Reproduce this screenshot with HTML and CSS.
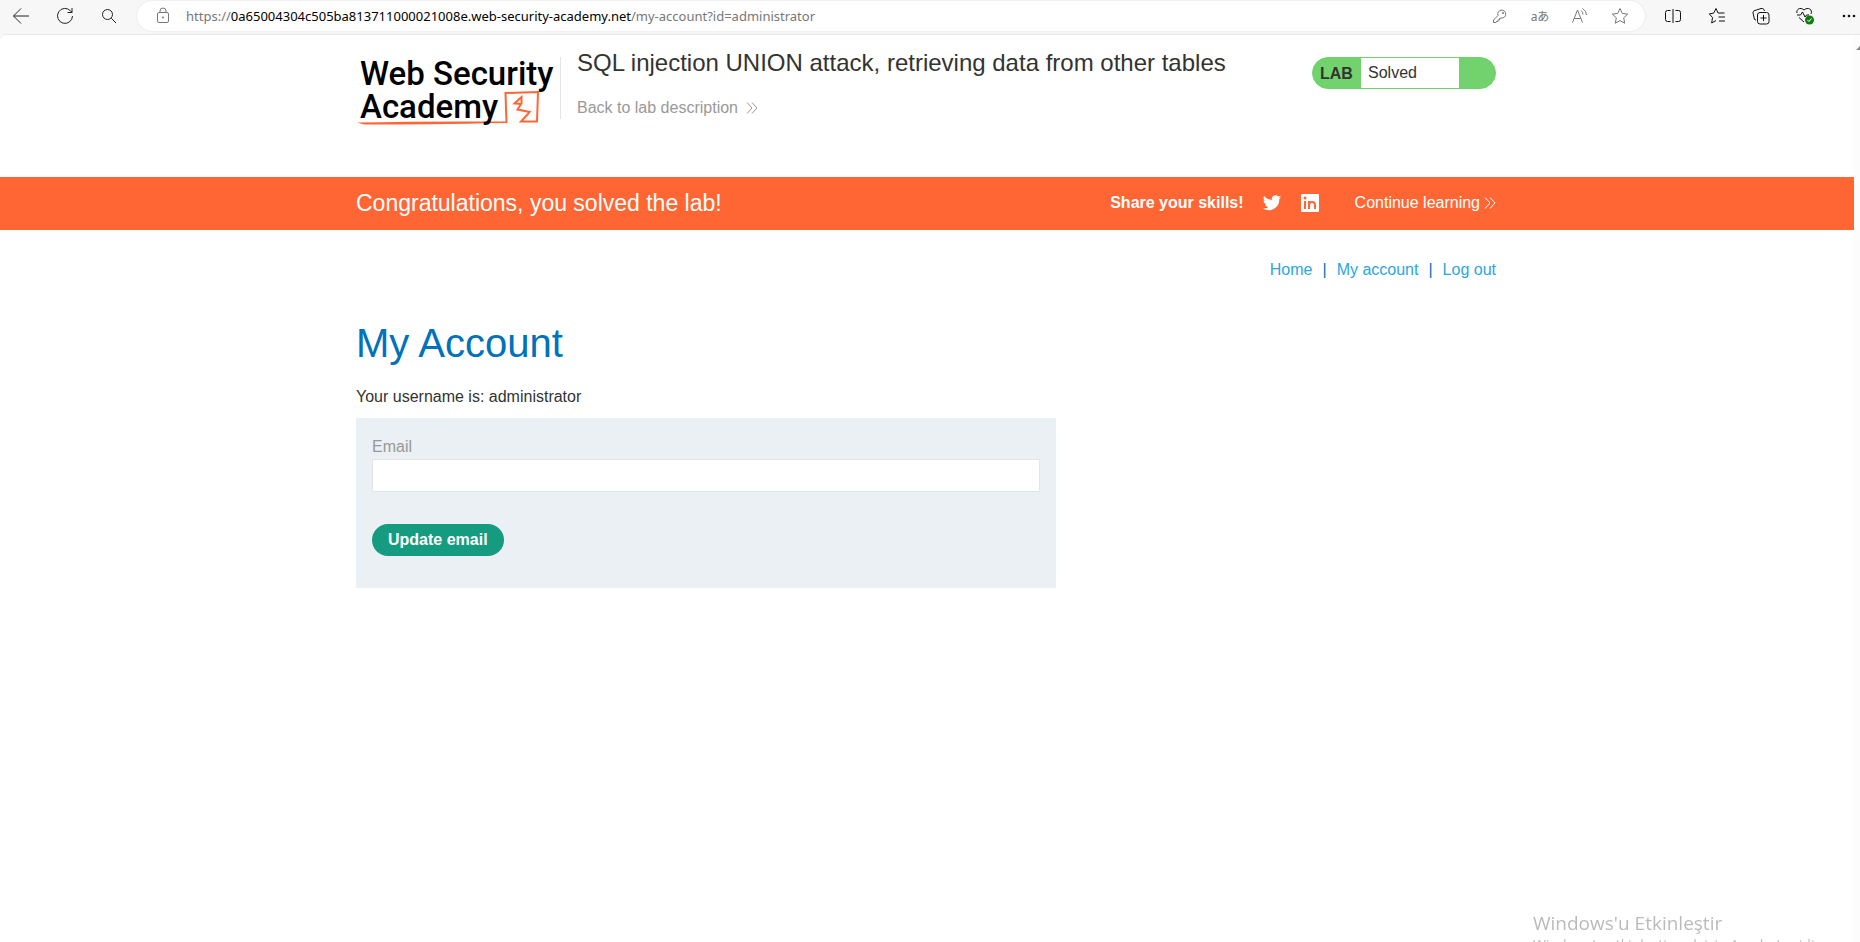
FILE: index.html
```html
<!DOCTYPE html>
<html lang="en">
<head>
    <meta charset="UTF-8">
    <title>SQL injection UNION attack, retrieving data from other tables</title>
    <link rel="stylesheet" href="styles.css">
</head>
<body>
<!-- browser toolbar -->
<div class="toolbar">
    <div class="tools-left">
        <button class="tool" aria-label="Back"><svg width="18" height="18" viewBox="0 0 18 18"><path d="M17 9H1.500M9 1.500L1.500 9L9 16.500"/></svg></button>
        <button class="tool" aria-label="Refresh"><svg width="18" height="18" viewBox="0 0 18 18"><path d="M16.500 9A7.500 7.500 0 1 1 14.500 3.800L16 5.500M16 1V5.500H11.500"/></svg></button>
        <button class="tool" aria-label="Search"><svg width="16" height="16" viewBox="0 0 16 16"><circle cx="6.500" cy="6.500" r="5"/><path d="M10.300 10.300L15 15"/></svg></button>
    </div>
    <div class="address">
        <svg class="lock" width="14" height="18" viewBox="0 0 14 18"><rect x="1.500" y="5.500" width="11" height="10" rx="1.500"/><path d="M4 5.500V4A3 3 0 0 1 10 4V5.500"/><circle class="dot" cx="7" cy="10.500" r="1"/></svg>
        <p class="url">https://<b>0a65004304c505ba813711000021008e.web-security-academy.net</b>/my-account?id=administrator</p>
        <button class="tool" aria-label="Passwords"><svg width="16" height="16" viewBox="0 0 16 16"><path d="M6 7.500A4 4 0 1 1 9 10L7.500 10.500V12H6V13.500H4.500L4 14.500H1.500V12Z"/><circle class="dot" cx="11" cy="5" r="1"/></svg></button>
        <button class="tool translate" aria-label="Translate">aあ</button>
        <button class="tool" aria-label="Read aloud"><svg width="18" height="18" viewBox="0 0 18 18"><path d="M1.500 15.500L6.500 3L11.500 15.500M3.200 11.500H9.800M10 3.500Q12 5 12 7.500M11.500 1.500Q15.500 4 15.500 8"/></svg></button>
        <button class="tool" aria-label="Add to favourites"><svg width="18" height="18" viewBox="0 0 18 18"><path d="M9 1.500L11.300 6.400L16.700 7.100L12.700 10.800L13.700 16.200L9 13.600L4.300 16.200L5.300 10.800L1.300 7.100L6.700 6.400Z"/></svg></button>
    </div>
    <div class="tools-right">
        <button class="tool" aria-label="Split screen"><svg width="18" height="18" viewBox="0 0 18 18"><path d="M6.500 3.500H3.500Q1.500 3.500 1.500 5.500V12.500Q1.500 14.500 3.500 14.500H6.500M11.500 3.500H14.500Q16.500 3.500 16.500 5.500V12.500Q16.500 14.500 14.500 14.500H11.500M9 2V16"/></svg></button>
        <button class="tool" aria-label="Favourites"><svg width="18" height="18" viewBox="0 0 18 18"><path d="M16.500 6H10L8 1.500L5.700 6.100L1.300 6.900L4.500 10.500L3.700 16L8 13.500M10.500 10H17M11 14H17"/></svg></button>
        <button class="tool" aria-label="Collections"><svg width="18" height="18" viewBox="0 0 18 18"><path d="M4 13L2.500 12.500L1 6Q.7 4.500 2 3.800L9 1.500Q11 1 12 2.500L12.500 4M11.500 8V14M8.500 11H14.500"/><rect x="5.500" y="5.500" width="11.500" height="11.500" rx="2.500"/></svg></button>
        <button class="tool" aria-label="Browser essentials"><svg width="20" height="20" viewBox="0 0 20 20"><path d="M2 7C1 3.500 5 .5 9 4C13 .5 18 3.500 16 8M2 9H5.500L7.500 6L10 11L11.500 9H14M4 11.500L9 16"/><circle class="badge" cx="14.500" cy="14" r="4.500"/><path class="tick" d="M12.500 14L14 15.500L16.500 12.500"/></svg></button>
        <button class="tool" aria-label="More"><svg width="16" height="16" viewBox="0 0 16 16"><circle class="dot" cx="3" cy="8" r="1.300"/><circle class="dot" cx="8" cy="8" r="1.300"/><circle class="dot" cx="13" cy="8" r="1.300"/></svg></button>
    </div>
</div>

<div class="viewport">
    <div class="page">
        <header class="container lab-header">
            <svg class="logo" width="204" height="76" viewBox="0 0 204 76" role="img" aria-label="Web Security Academy">
                <path class="line" d="M1 70.500Q70 69 151 69.500V71Q70 72.500 8 72.500Z"/>
                <path class="frame" d="M150.500 71L149.500 41L182 40L181 69.500L165 69.500L171.500 62.500L173.500 60L161.500 57.500L165 52L158.500 51.500L165.500 45V51.500"/>
                <text x="4" y="33">Web Security</text>
                <text x="4" y="66">Academy</text>
            </svg>
            <div class="title">
                <h2>SQL injection UNION attack, retrieving data from other tables</h2>
                <a class="back" href="#">Back to lab description
                    <svg width="12" height="12" viewBox="0 0 12 12"><path d="M1 .5L6 6L1 11.500M6 .5L11 6L6 11.500"/></svg>
                </a>
            </div>
            <div class="status">
                <span class="lab">LAB</span>
                <p>Solved</p>
            </div>
        </header>

        <!-- solved banner -->
        <section class="banner">
            <div class="container">
                <h4>Congratulations, you solved the lab!</h4>
                <div class="share">
                    <span>Share your skills!</span>
                    <a href="#" aria-label="Twitter"><svg width="20" height="20" viewBox="0 0 24 24"><path class="fill" d="M23 4.900c-.8.400-1.700.6-2.600.7.900-.6 1.600-1.400 2-2.500-.9.500-1.800.9-2.900 1.100A4.500 4.500 0 0 0 11.800 8.300C8 8.100 4.700 6.300 2.500 3.600c-1.200 2.100-.6 4.700 1.400 6-.7 0-1.400-.2-2-.6 0 2.200 1.500 4.100 3.600 4.500-.7.200-1.400.2-2 .1.600 1.800 2.200 3.100 4.200 3.100A9 9 0 0 1 1 18.600 12.800 12.800 0 0 0 20.700 7.200c.9-.6 1.700-1.400 2.300-2.300z"/></svg></a>
                    <a href="#" aria-label="LinkedIn"><svg width="20" height="20" viewBox="0 0 20 20"><rect class="fill" x="1" y="1" width="18" height="18" rx="1"/><path class="cut" d="M5 8V16M9 8V16M9 12Q9 9 12 9Q15 9 15 12V16"/><circle class="cut-dot" cx="5" cy="5" r="1.500"/></svg></a>
                </div>
                <a class="continue" href="#">Continue learning
                    <svg width="12" height="12" viewBox="0 0 12 12"><path d="M1 .5L6 6L1 11.500M6 .5L11 6L6 11.500"/></svg>
                </a>
            </div>
        </section>

        <main class="container account">
            <nav>
                <a href="#">Home</a><span>|</span><a href="#">My account</a><span>|</span><a href="#">Log out</a>
            </nav>
            <h1>My Account</h1>
            <p>Your username is: administrator</p>
            <form>
                <label for="email">Email</label>
                <input type="email" id="email" name="email">
                <button type="submit">Update email</button>
            </form>
        </main>
    </div>
    <div class="scrollbar"></div>
</div>

<div class="watermark">
    <p class="big">Windows'u Etkinleştir</p>
    <p>Windows'u etkinleştirmek için Ayarlar'a gidin.</p>
</div>
</body>
</html>
```
FILE: styles.css
```css
*{
    box-sizing: border-box;
    margin: 0;
    padding: 0;
}
html,body{
    height: 100%;
}
body{
    display: flex;
    flex-direction: column;
    overflow: hidden;
    background-color: #f7f7f7;
    color: #333332;
    font-family: "Liberation Sans", Arial, sans-serif;
    font-size: 16px;
    line-height: 24px;
}
a{
    text-decoration: none;
}
svg{
    display: block;
    flex: none;
    fill: none;
    stroke: currentColor;
}
/* toolbar */
.toolbar{
    display: flex;
    align-items: center;
    height: 34px;
    padding-bottom: 2px;
    overflow: hidden;
}
.tool{
    display: flex;
    align-items: center;
    justify-content: center;
    flex: none;
    width: 24px;
    height: 24px;
    border: 0;
    background: none;
    color: inherit;
}
.tools-left{
    display: flex;
    gap: 20px;
    width: 137px;
    padding-left: 9px;
    color: #222;
}
.address{
    display: flex;
    flex: 1;
    align-items: center;
    gap: 16px;
    height: 30px;
    padding: 0 13px 0 19px;
    border-radius: 15px;
    background-color: #fff;
    box-shadow: 0 0 2px #ddd;
    color: #777;
}
.url{
    flex: 1;
    font-family: "Noto Sans", sans-serif;
    font-size: 13px;
}
.url b{
    color: #000;
    font-weight: normal;
}
.translate{
    font-family: "Noto Sans", "Noto Sans CJK JP", sans-serif;
    font-size: 12px;
}
.tools-right{
    display: flex;
    gap: 20px;
    padding-left: 16px;
    color: #111;
    width: 215px;
}
.dot{
    fill: currentColor;
    stroke: none;
}
.badge{
    fill: #107c10;
    stroke: none;
}
.tick{
    stroke: #fff;
}
/* page area */
.viewport{
    display: flex;
    flex: 1;
    border-top: 1px solid #e8e8e8;
    border-top-left-radius: 6px;
    background-color: #fff;
}
.page{
    flex: 1;
}
.scrollbar{
    width: 6px;
    overflow: hidden;
    background-color: #fcfcfc;
}
.scrollbar::before{
    content: "";
    display: block;
    width: 8px;
    margin: 11px 0 0 2px;
    border: 4px solid transparent;
    border-top: 0;
    border-bottom: 4px solid #888;
}
.container{
    display: flex;
    max-width: 1142px;
    margin: 0 auto;
    padding-right: 2px;
}
.lab-header{
    height: 142px;
    padding-top: 16px;
}
.logo{
    margin-top: 1px;
}
.logo text{
    fill: #000;
    stroke: none;
    font-family: Roboto, sans-serif;
    font-size: 33px;
    font-weight: 500;
}
.line{
    fill: #ff6633;
    stroke: none;
}
.frame{
    stroke: #ff6633;
    stroke-width: 2;
}
.title{
    flex: 1;
    height: 62px;
    margin-top: 6px;
    border-left: 1px solid #e5e5e5;
    padding-left: 16px;
}
.title h2{
    margin-top: -8px;
    font-size: 24px;
    font-weight: normal;
    line-height: 28px;
}
.back{
    display: inline-flex;
    align-items: center;
    gap: 8px;
    margin-top: 19px;
    color: #999;
}
.status{
    display: flex;
    width: 184px;
    height: 32px;
    margin-top: 6px;
    overflow: hidden;
    border: 1px solid #72d36e;
    border-radius: 16px;
    background-color: #72d36e;
    line-height: 30px;
}
.lab{
    width: 48px;
    padding-left: 7px;
    font-weight: bold;
    line-height: 32px;
}
.status p{
    width: 98px;
    padding-left: 7px;
    background-color: #fff;
}
.banner{
    background-color: #ff6633;
    color: #fff;
}
.banner .container{
    align-items: center;
    height: 53px;
    padding-bottom: 2px;
}
.banner h4{
    flex: 1;
    font-size: 23px;
    font-weight: normal;
}
.banner a{
    color: #fff;
}
.share{
    display: flex;
    align-items: center;
    gap: 18px;
    margin-right: 35px;
    font-weight: bold;
}
.continue{
    display: flex;
    align-items: center;
    gap: 4px;
}
.fill{
    fill: #fff;
    stroke: none;
}
.cut{
    stroke: #ff6633;
    stroke-width: 2;
}
.cut-dot{
    fill: #ff6633;
    stroke: none;
}
/* account */
.account{
    flex-direction: column;
    padding-top: 28px;
}
nav{
    display: flex;
    justify-content: flex-end;
    gap: 10px;
    color: #0071bb;
}
nav a{
    color: #29a7df;
}
h1{
    margin-top: 37px;
    color: #0071bb;
    font-size: 40px;
    font-weight: normal;
    line-height: 48px;
}
.account p{
    margin-top: 18px;
}
form{
    display: flex;
    flex-direction: column;
    align-items: flex-start;
    max-width: 700px;
    margin-top: 9px;
    padding: 16px 16px 32px;
    background-color: #eaf0f3;
}
label{
    color: #999;
    line-height: 25px;
}
input{
    width: 100%;
    height: 33px;
    border: 1px solid #e5e5e5;
    padding: 0 8px;
    background-color: #fff;
    font: inherit;
}
form button{
    height: 32px;
    margin-top: 32px;
    border: 0;
    border-radius: 16px;
    padding: 0 16px;
    background-color: #159b7f;
    color: #fff;
    font: inherit;
    font-weight: bold;
}
/* activation notice lies over the page */
.watermark{
    position: fixed;
    top: 909px;
    left: 1533px;
    color: #bbb;
    font-family: "Open Sans", sans-serif;
    font-size: 14px;
    line-height: 16px;
    white-space: nowrap;
}
.watermark .big{
    font-size: 19px;
    line-height: 28px;
}
```
